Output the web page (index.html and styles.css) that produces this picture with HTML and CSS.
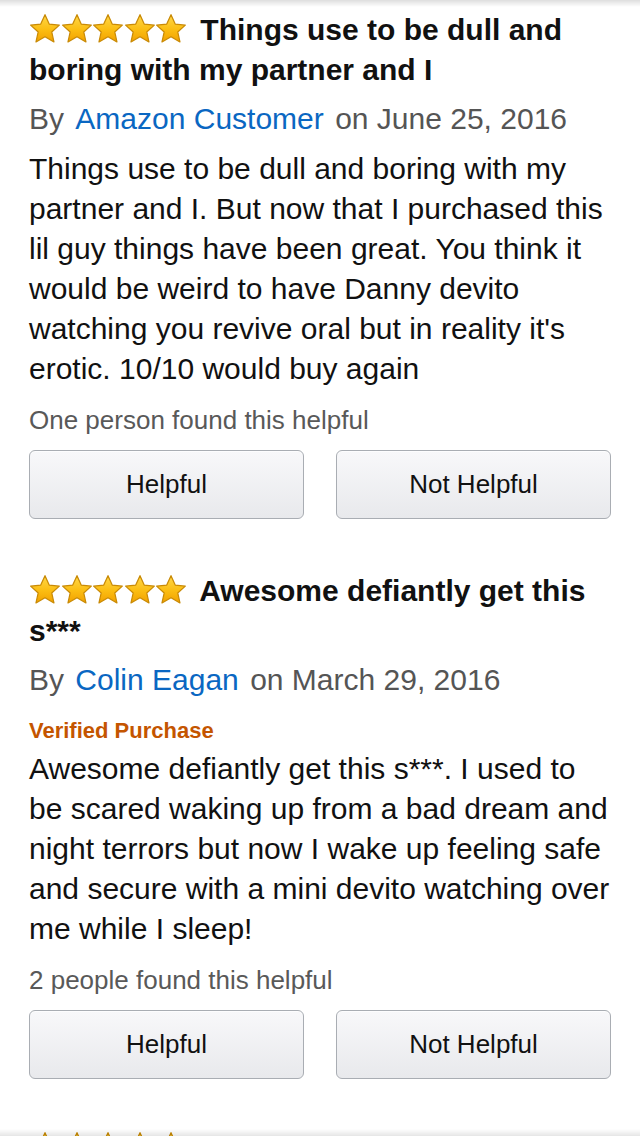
FILE: index.html
```html
<!DOCTYPE html>
<html lang="en">
<head>
    <meta charset="UTF-8">
    <meta name="viewport" content="width=device-width, initial-scale=1.0">
    <title>Customer Reviews</title>
    <link rel="stylesheet" href="styles.css">
</head>
<body>

    <!-- star shape, used by every rating -->
    <svg class="defs" width="0" height="0" aria-hidden="true">
        <defs>
            <linearGradient id="starFill" x1="0" y1="0" x2="0" y2="1">
                <stop offset="0" stop-color="#ffd84a"/>
                <stop offset="0.55" stop-color="#fbbd12"/>
                <stop offset="1" stop-color="#f2a100"/>
            </linearGradient>
            <symbol id="star" viewBox="1.1 1.1 21.8 21.8">
                <path d="M12 1.6l3.05 6.85 7.35.75-5.5 4.95 1.6 7.25L12 17.6l-6.55 3.8 1.6-7.25-5.5-4.95 7.35-.75z"
                      fill="url(#starFill)" stroke="#c98a06" stroke-width="0.9" stroke-linejoin="round"/>
            </symbol>
        </defs>
    </svg>

    <main class="reviews">

        <div class="review">
            <h2 class="review-title">
                <span class="stars"><svg><use href="#star"/></svg><svg><use href="#star"/></svg><svg><use href="#star"/></svg><svg><use href="#star"/></svg><svg><use href="#star"/></svg></span>
                Things use to be dull and boring with my partner and I
            </h2>
            <p class="byline">By <a href="#">Amazon Customer</a> on June 25, 2016</p>
            <p class="review-text">Things use to be dull and boring with my partner and I. But now that I purchased this lil guy things have been great. You think it would be weird to have Danny devito watching you revive oral but in reality it's erotic. 10/10 would buy again</p>
            <p class="helpful-count">One person found this helpful</p>
            <div class="vote">
                <button class="vote-btn">Helpful</button>
                <button class="vote-btn">Not Helpful</button>
            </div>
        </div>

        <div class="review">
            <h2 class="review-title">
                <span class="stars"><svg><use href="#star"/></svg><svg><use href="#star"/></svg><svg><use href="#star"/></svg><svg><use href="#star"/></svg><svg><use href="#star"/></svg></span>
                Awesome defiantly get this s***
            </h2>
            <p class="byline">By <a href="#">Colin Eagan</a> on March 29, 2016</p>
            <p class="verified">Verified Purchase</p>
            <p class="review-text">Awesome defiantly get this s***. I used to be scared waking up from a bad dream and night terrors but now I wake up feeling safe and secure with a mini devito watching over me while I sleep!</p>
            <p class="helpful-count">2 people found this helpful</p>
            <div class="vote">
                <button class="vote-btn">Helpful</button>
                <button class="vote-btn">Not Helpful</button>
            </div>
        </div>

        <!-- next review, only its stars peek in at the bottom -->
        <div class="review review-next">
            <div class="review-title">
                <span class="stars"><svg><use href="#star"/></svg><svg><use href="#star"/></svg><svg><use href="#star"/></svg><svg><use href="#star"/></svg><svg><use href="#star"/></svg></span>
            </div>
        </div>

    </main>

</body>
</html>
```

FILE: styles.css
```css
/* page */
body {
    margin: 0;
    padding: 0;
    background: #fff;
    color: #111;
    font-family: "Liberation Sans", Arial, Helvetica, sans-serif;
    overflow: hidden;
}

/* soft shade at top and bottom edge of the screen */
body::before,
body::after {
    content: "";
    position: fixed;
    left: 0;
    right: 0;
    height: 7px;
    z-index: 10;
    pointer-events: none;
}
body::before {
    top: 0;
    background: linear-gradient(rgba(0, 0, 0, 0.13), rgba(0, 0, 0, 0));
}
body::after {
    bottom: 0;
    background: linear-gradient(rgba(0, 0, 0, 0), rgba(0, 0, 0, 0.10));
}

.defs {
    position: absolute;
}

.reviews {
    padding: 10px 29px 0 29px;
}

.review {
    padding-bottom: 52px;
}

.review-next {
    margin-top: -3px;
}

/* title with rating */
.review-title {
    margin: 0;
    font-size: 30px;
    line-height: 40px;
    font-weight: bold;
    color: #111;
}

.stars {
    display: inline-flex;
    gap: 1.5px;
    vertical-align: -4px;
    margin-right: 6px;
    margin-left: 1px;
}

.stars svg {
    width: 30px;
    height: 30px;
}

/* author line */
.byline {
    margin: 9px 0 10px 0;
    font-size: 30px;
    line-height: 40px;
    color: #555;
}

.byline a {
    color: #0a67c2;
    text-decoration: none;
    margin: 0 3px;
}

.verified {
    margin: 17px 0 4px 0;
    font-size: 22px;
    line-height: 28px;
    font-weight: bold;
    color: #c45500;
}

.review-text {
    margin: 0;
    font-size: 30px;
    line-height: 40px;
    color: #111;
}

.helpful-count {
    margin: 16px 0 0 0;
    font-size: 26px;
    line-height: 30px;
    color: #595959;
}

/* vote buttons */
.vote {
    display: grid;
    grid-template-columns: 1fr 1fr;
    gap: 32px;
    margin-top: 15px;
}

.vote-btn {
    height: 69px;
    border: 1px solid #a9adb3;
    border-radius: 6px;
    background: linear-gradient(#f8f8fa, #e8e9ec);
    box-shadow: inset 0 1px 0 rgba(255, 255, 255, 0.7);
    font-family: "Liberation Sans", Arial, Helvetica, sans-serif;
    font-size: 26px;
    color: #111;
    padding: 0;
}
```
